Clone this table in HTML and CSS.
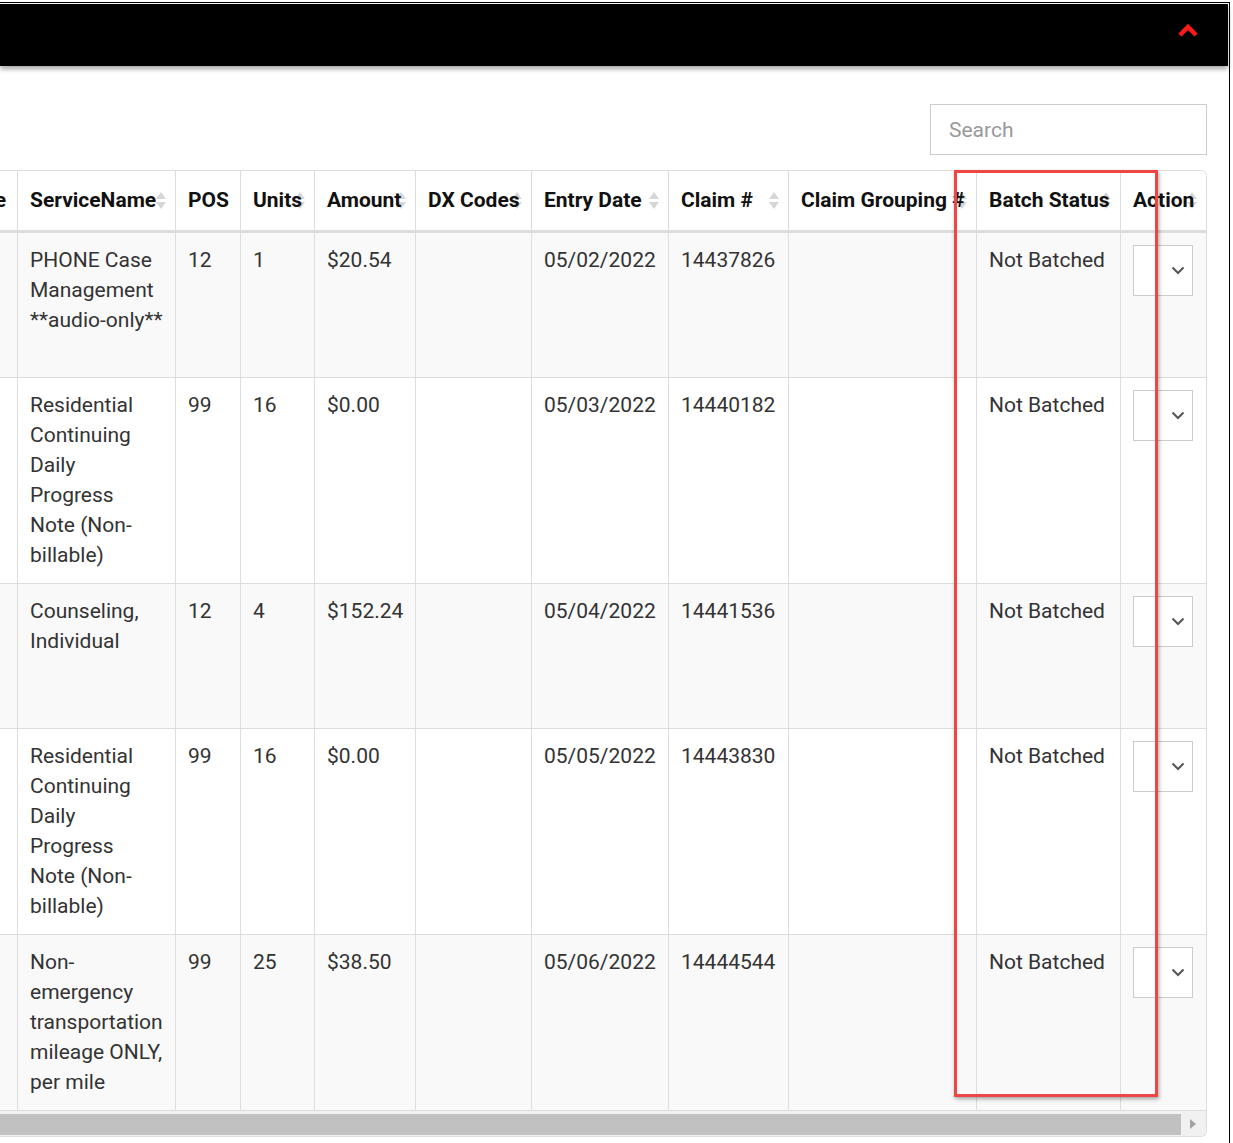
FILE: index.html
```html
<!DOCTYPE html>
<html lang="en">
<head>
<meta charset="utf-8">
<title>Claims</title>
<link rel="stylesheet" href="styles.css">
</head>
<body>
<div class="frame">
  <header class="topbar">
    <svg class="collapse" width="22" height="16" viewBox="0 0 22 16" aria-hidden="true">
      <polyline points="3,13 11,5 19,13" fill="none" stroke="#ff1a1a" stroke-width="4.5" stroke-linejoin="miter"/>
    </svg>
  </header>
  <main class="content">
    <div class="toolbar">
      <input class="search" type="text" placeholder="Search">
    </div>
    <div class="card">
      <div class="scroller">
        <table class="grid">
          <thead>
            <tr>
              <th class="c0"><div class="clip"><span>Date</span></div></th>
              <th class="c1 sort">ServiceName</th>
              <th class="c2">POS</th>
              <th class="c3 sort">Units</th>
              <th class="c4 sort">Amount</th>
              <th class="c5 sort">DX Codes</th>
              <th class="c6 sort">Entry Date</th>
              <th class="c7 sort">Claim #</th>
              <th class="c8 sort">Claim Grouping #</th>
              <th class="c9 sort">Batch Status</th>
              <th class="c10 sort">Action</th>
            </tr>
          </thead>
          <tbody>
            <tr class="odd h4">
              <td></td>
              <td>PHONE Case Management **audio-only**</td>
              <td>12</td>
              <td>1</td>
              <td>$20.54</td>
              <td></td>
              <td>05/02/2022</td>
              <td>14437826</td>
              <td></td>
              <td>Not Batched</td>
              <td><div class="select"><svg width="14" height="9" viewBox="0 0 14 9"><polyline points="1.5,1.5 7,7 12.5,1.5" fill="none" stroke="#555" stroke-width="2"/></svg></div></td>
            </tr>
            <tr>
              <td></td>
              <td>Residential Continuing Daily Progress Note (Non-billable)</td>
              <td>99</td>
              <td>16</td>
              <td>$0.00</td>
              <td></td>
              <td>05/03/2022</td>
              <td>14440182</td>
              <td></td>
              <td>Not Batched</td>
              <td><div class="select"><svg width="14" height="9" viewBox="0 0 14 9"><polyline points="1.5,1.5 7,7 12.5,1.5" fill="none" stroke="#555" stroke-width="2"/></svg></div></td>
            </tr>
            <tr class="odd h4">
              <td></td>
              <td>Counseling, Individual</td>
              <td>12</td>
              <td>4</td>
              <td>$152.24</td>
              <td></td>
              <td>05/04/2022</td>
              <td>14441536</td>
              <td></td>
              <td>Not Batched</td>
              <td><div class="select"><svg width="14" height="9" viewBox="0 0 14 9"><polyline points="1.5,1.5 7,7 12.5,1.5" fill="none" stroke="#555" stroke-width="2"/></svg></div></td>
            </tr>
            <tr>
              <td></td>
              <td>Residential Continuing Daily Progress Note (Non-billable)</td>
              <td>99</td>
              <td>16</td>
              <td>$0.00</td>
              <td></td>
              <td>05/05/2022</td>
              <td>14443830</td>
              <td></td>
              <td>Not Batched</td>
              <td><div class="select"><svg width="14" height="9" viewBox="0 0 14 9"><polyline points="1.5,1.5 7,7 12.5,1.5" fill="none" stroke="#555" stroke-width="2"/></svg></div></td>
            </tr>
            <tr class="odd">
              <td></td>
              <td>Non-emergency transportation mileage ONLY, per mile</td>
              <td>99</td>
              <td>25</td>
              <td>$38.50</td>
              <td></td>
              <td>05/06/2022</td>
              <td>14444544</td>
              <td></td>
              <td>Not Batched</td>
              <td><div class="select"><svg width="14" height="9" viewBox="0 0 14 9"><polyline points="1.5,1.5 7,7 12.5,1.5" fill="none" stroke="#555" stroke-width="2"/></svg></div></td>
            </tr>
          </tbody>
        </table>
      </div>
      <div class="hscroll">
        <div class="thumb"></div>
        <div class="arrow"></div>
      </div>
    </div>
  </main>
  <div class="highlight"></div>
</div>
</body>
</html>
```

FILE: styles.css
```css
* { box-sizing: border-box; }

html, body {
  margin: 0;
  padding: 0;
  background: #fff;
  overflow: hidden;
}

body {
  font-family: Roboto, "Liberation Sans", Arial, sans-serif;
  color: #333;
}

.frame {
  position: relative;
  width: 1230px;
  height: 1141px;
  margin-top: 2px;
  border-top: 1px solid #000;
  border-right: 1px solid #000;
  padding-top: 1px;
  padding-right: 1px;
}

.topbar {
  height: 62px;
  background: #000;
  box-shadow: 0 3px 5px rgba(0, 0, 0, 0.35);
  display: flex;
  justify-content: flex-end;
  align-items: flex-start;
  padding: 18px 29px 0 0;
  position: relative;
  z-index: 2;
}

.collapse { display: block; }

.content {
  padding: 38px 21px 0 0;
}

.toolbar {
  display: flex;
  justify-content: flex-end;
  margin-bottom: 15px;
}

.search {
  width: 277px;
  height: 51px;
  border: 1px solid #ccc;
  padding: 0 18px;
  font-family: Roboto, "Liberation Sans", Arial, sans-serif;
  font-size: 21px;
  color: #555;
  outline: none;
}

.search::placeholder { color: #999; }

.card {
  width: 1207px;
  border: 1px solid #ddd;
  border-left: 0;
  border-radius: 0 6px 6px 0;
  overflow: hidden;
}

.scroller { overflow: hidden; }

.grid {
  width: 1206px;
  table-layout: fixed;
  border-collapse: separate;
  border-spacing: 0;
  font-size: 21px;
  line-height: 30px;
}

.grid th, .grid td {
  border-right: 1px solid #ddd;
  text-align: left;
  vertical-align: top;
}

.grid th:last-child, .grid td:last-child { border-right: 0; }

.grid th {
  position: relative;
  z-index: 0;
  height: 62px;
  padding: 14px 12px 15px;
  font-weight: 700;
  color: #111;
  white-space: nowrap;
  border-bottom: 3px solid #ddd;
  background: #fff;
}

.grid th.c0 { padding: 14px 0 15px; overflow: hidden; }

.clip {
  display: flex;
  justify-content: flex-end;
  overflow: hidden;
  padding-right: 11px;
}

.c0 { width: 18px; }
.c1 { width: 158px; }
.c2 { width: 65px; }
.c3 { width: 74px; }
.c4 { width: 101px; }
.c5 { width: 116px; }
.c6 { width: 137px; }
.c7 { width: 120px; }
.c8 { width: 188px; }
.c9 { width: 144px; }
.c10 { width: 85px; }

.sort::before,
.sort::after {
  content: "";
  position: absolute;
  z-index: -1;
  right: 9px;
  width: 0;
  height: 0;
  border-left: 5px solid transparent;
  border-right: 5px solid transparent;
  filter: blur(0.6px);
}

.sort::before {
  top: 21px;
  border-bottom: 7px solid #d6d6d6;
}

.sort::after {
  top: 31px;
  border-top: 7px solid #d6d6d6;
}

.grid td {
  padding: 12px 12px 13px;
  border-bottom: 1px solid #ddd;
  background: #fff;
}

.grid tr.odd td { background: #f9f9f9; }

.grid tr.h4 td { height: 145px; }

.select {
  width: 60px;
  height: 51px;
  border: 1px solid #ccc;
  background: #fff;
  display: flex;
  align-items: center;
  justify-content: flex-end;
  padding-right: 7px;
}

.select svg { display: block; }

.hscroll {
  height: 25px;
  background: #f1f1f1;
  display: flex;
  align-items: center;
  padding-top: 1px;
}

.thumb {
  width: 1181px;
  height: 21px;
  background: #c1c1c1;
}

.arrow {
  margin-left: 9px;
  width: 0;
  height: 0;
  border-top: 5px solid transparent;
  border-bottom: 5px solid transparent;
  border-left: 6px solid #a3a3a3;
}

.highlight {
  position: absolute;
  left: 954px;
  top: 167px;
  width: 204px;
  height: 927px;
  border: 3px solid #f04545;
  box-shadow: 1px 2px 4px rgba(0, 0, 0, 0.35);
  pointer-events: none;
  z-index: 3;
}
```
